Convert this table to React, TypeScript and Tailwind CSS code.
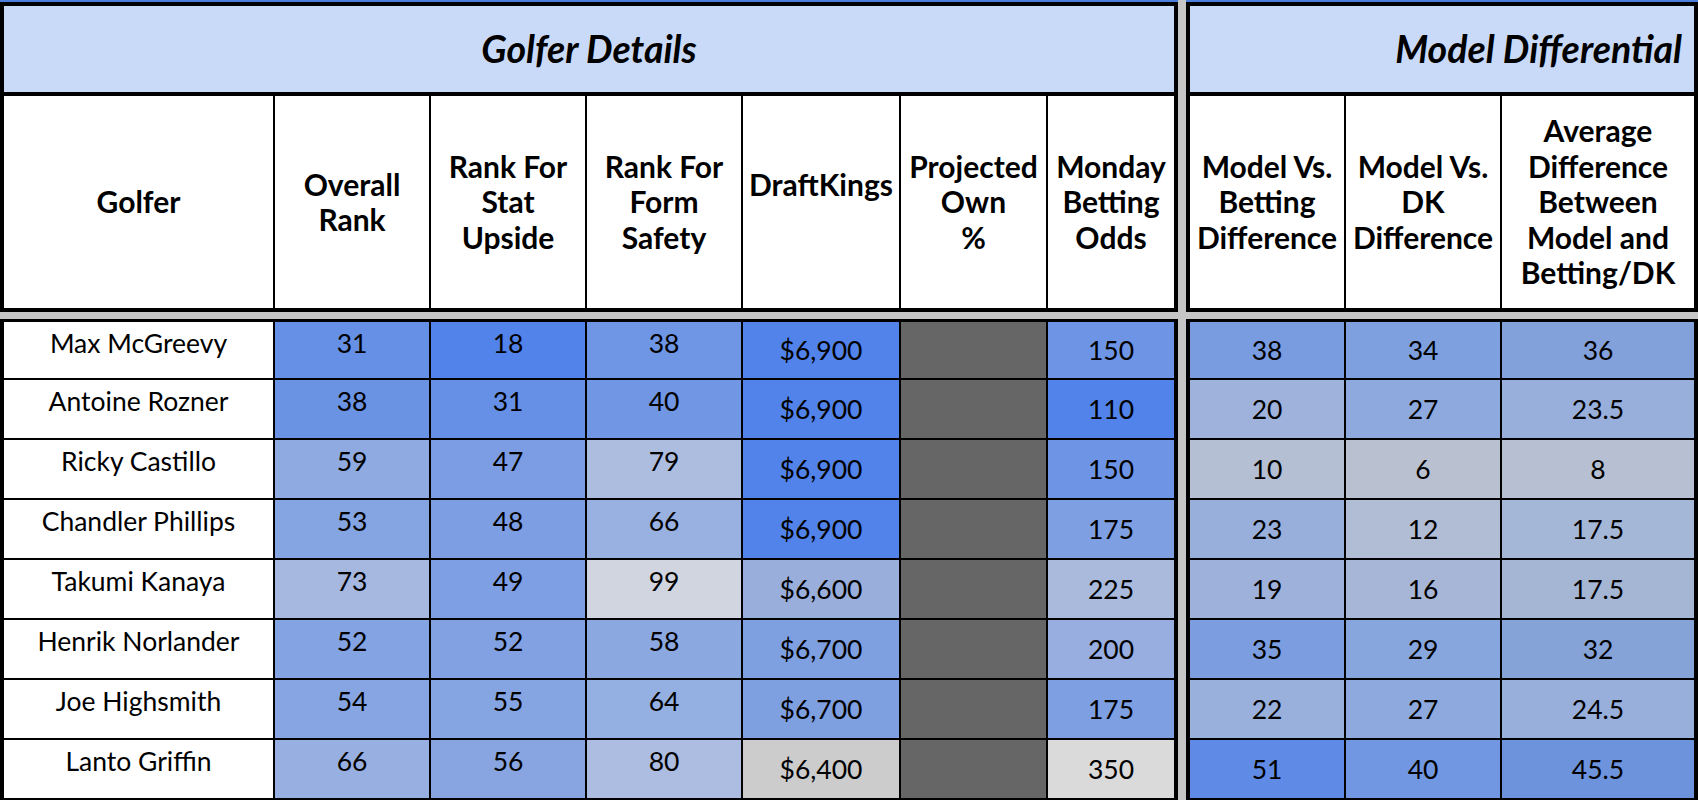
import React from 'react';

type Cell = { v: string; bg: string };

interface GolferRow {
  name: string;
  ranks: Cell[]; // overall, stat upside, form safety (top aligned)
  market: Cell[]; // draftkings, projected own, monday odds (centered)
  diff: Cell[]; // model differential
}

const PROJ = 'bg-[#666666]';

const rows: GolferRow[] = [
  {
    name: 'Max McGreevy',
    ranks: [
      { v: '31', bg: 'bg-[#6690e6]' },
      { v: '18', bg: 'bg-[#5283ea]' },
      { v: '38', bg: 'bg-[#6f95e5]' },
    ],
    market: [
      { v: '$6,900', bg: 'bg-[#5283eb]' },
      { v: '', bg: PROJ },
      { v: '150', bg: 'bg-[#6e95e5]' },
    ],
    diff: [
      { v: '38', bg: 'bg-[#799ce0]' },
      { v: '34', bg: 'bg-[#7ea0df]' },
      { v: '36', bg: 'bg-[#82a0d9]' },
    ],
  },
  {
    name: 'Antoine Rozner',
    ranks: [
      { v: '38', bg: 'bg-[#6b93e4]' },
      { v: '31', bg: 'bg-[#6690e6]' },
      { v: '40', bg: 'bg-[#7096e4]' },
    ],
    market: [
      { v: '$6,900', bg: 'bg-[#5283eb]' },
      { v: '', bg: PROJ },
      { v: '110', bg: 'bg-[#5283ea]' },
    ],
    diff: [
      { v: '20', bg: 'bg-[#9fb2dc]' },
      { v: '27', bg: 'bg-[#8da9de]' },
      { v: '23.5', bg: 'bg-[#98afdc]' },
    ],
  },
  {
    name: 'Ricky Castillo',
    ranks: [
      { v: '59', bg: 'bg-[#8eaae0]' },
      { v: '47', bg: 'bg-[#7c9de3]' },
      { v: '79', bg: 'bg-[#adbde0]' },
    ],
    market: [
      { v: '$6,900', bg: 'bg-[#5283eb]' },
      { v: '', bg: PROJ },
      { v: '150', bg: 'bg-[#6e95e5]' },
    ],
    diff: [
      { v: '10', bg: 'bg-[#b4bfd3]' },
      { v: '6', bg: 'bg-[#b9c1d1]' },
      { v: '8', bg: 'bg-[#b6c0d2]' },
    ],
  },
  {
    name: 'Chandler Phillips',
    ranks: [
      { v: '53', bg: 'bg-[#85a4e2]' },
      { v: '48', bg: 'bg-[#7d9ee3]' },
      { v: '66', bg: 'bg-[#99b1e1]' },
    ],
    market: [
      { v: '$6,900', bg: 'bg-[#5283eb]' },
      { v: '', bg: PROJ },
      { v: '175', bg: 'bg-[#7f9fe3]' },
    ],
    diff: [
      { v: '23', bg: 'bg-[#98afdb]' },
      { v: '12', bg: 'bg-[#b0bdd5]' },
      { v: '17.5', bg: 'bg-[#a5b7d7]' },
    ],
  },
  {
    name: 'Takumi Kanaya',
    ranks: [
      { v: '73', bg: 'bg-[#a6b8e0]' },
      { v: '49', bg: 'bg-[#7e9fe3]' },
      { v: '99', bg: 'bg-[#d0d5e0]' },
    ],
    market: [
      { v: '$6,600', bg: 'bg-[#9aaedb]' },
      { v: '', bg: PROJ },
      { v: '225', bg: 'bg-[#a9badd]' },
    ],
    diff: [
      { v: '19', bg: 'bg-[#9db1db]' },
      { v: '16', bg: 'bg-[#a7b6d6]' },
      { v: '17.5', bg: 'bg-[#a5b5d4]' },
    ],
  },
  {
    name: 'Henrik Norlander',
    ranks: [
      { v: '52', bg: 'bg-[#84a3e2]' },
      { v: '52', bg: 'bg-[#81a1e3]' },
      { v: '58', bg: 'bg-[#8ba8e1]' },
    ],
    market: [
      { v: '$6,700', bg: 'bg-[#7e9fe0]' },
      { v: '', bg: PROJ },
      { v: '200', bg: 'bg-[#98aee0]' },
    ],
    diff: [
      { v: '35', bg: 'bg-[#7c9ee0]' },
      { v: '29', bg: 'bg-[#88a6de]' },
      { v: '32', bg: 'bg-[#86a3d8]' },
    ],
  },
  {
    name: 'Joe Highsmith',
    ranks: [
      { v: '54', bg: 'bg-[#86a5e2]' },
      { v: '55', bg: 'bg-[#85a4e2]' },
      { v: '64', bg: 'bg-[#94afe1]' },
    ],
    market: [
      { v: '$6,700', bg: 'bg-[#7e9fe0]' },
      { v: '', bg: PROJ },
      { v: '175', bg: 'bg-[#7f9fe3]' },
    ],
    diff: [
      { v: '22', bg: 'bg-[#9ab0dc]' },
      { v: '27', bg: 'bg-[#8da9de]' },
      { v: '24.5', bg: 'bg-[#98aedb]' },
    ],
  },
  {
    name: 'Lanto Griffin',
    ranks: [
      { v: '66', bg: 'bg-[#98b0e1]' },
      { v: '56', bg: 'bg-[#88a5e2]' },
      { v: '80', bg: 'bg-[#adbde1]' },
    ],
    market: [
      { v: '$6,400', bg: 'bg-[#cccccc]' },
      { v: '', bg: PROJ },
      { v: '350', bg: 'bg-[#dadada]' },
    ],
    diff: [
      { v: '51', bg: 'bg-[#5f8be6]' },
      { v: '40', bg: 'bg-[#7297e2]' },
      { v: '45.5', bg: 'bg-[#6c93dc]' },
    ],
  },
];

const leftHeaders = [
  'Golfer',
  'Overall\nRank',
  'Rank For\nStat\nUpside',
  'Rank For\nForm\nSafety',
  'DraftKings\n\u00a0',
  'Projected\nOwn\n%',
  'Monday\nBetting\nOdds',
];

const rightHeaders = [
  'Model Vs.\nBetting\nDifference',
  'Model Vs.\nDK\nDifference',
  'Average\nDifference\nBetween\nModel and\nBetting/DK',
];

const LEFT_COLS = 'grid-cols-[269px_154px_154px_154px_156px_145px_126px]';
const RIGHT_COLS = 'grid-cols-[154px_154px_192px]';
const ROWS = 'grid-rows-[56px_repeat(7,58px)]';

function HeaderCell({ label }: { label: string }) {
  return (
    <div className="flex items-center justify-center bg-white text-center font-bold text-[30px] leading-[35.5px] whitespace-pre-line">
      {label}
    </div>
  );
}

// rank columns sit at the top of the cell, the rest are centred
function TopCell({ cell }: { cell: Cell }) {
  return <div className={`${cell.bg} pt-[6px] text-center text-[26.5px] leading-[30px]`}>{cell.v}</div>;
}

function MidCell({ cell }: { cell: Cell }) {
  return (
    <div className={`${cell.bg} flex items-center justify-center text-[26.5px] leading-[30px]`}>{cell.v}</div>
  );
}

export default function App() {
  return (
    <div
      className="flex w-[1698px] h-[800px] gap-[8px] overflow-hidden bg-[#c6c6c6] text-black"
      style={{ fontFamily: 'Lato, "Open Sans", sans-serif' }}
    >
      {/* Golfer details */}
      <div className="flex flex-col w-[1178px]">
        <div className="h-[2px] bg-[#4a7fdc]" />
        <div className="flex flex-col border-4 border-black">
          <div className="flex h-[90px] items-center justify-center border-b-4 border-black bg-[#c9daf8]">
            <span className="text-[37.5px] font-bold italic">Golfer Details</span>
          </div>
          <div className={`grid ${LEFT_COLS} h-[212px] gap-[2px] bg-black`}>
            {leftHeaders.map((h) => (
              <HeaderCell key={h} label={h} />
            ))}
          </div>
        </div>
        <div className={`mt-[7px] grid ${LEFT_COLS} ${ROWS} gap-[2px] bg-black border-t-[3px] border-b-2 border-x-4 border-black`}>
          {rows.map((r) => (
            <React.Fragment key={r.name}>
              <TopCell cell={{ v: r.name, bg: 'bg-white' }} />
              {r.ranks.map((c, i) => (
                <TopCell key={'r' + i} cell={c} />
              ))}
              {r.market.map((c, i) => (
                <MidCell key={'m' + i} cell={c} />
              ))}
            </React.Fragment>
          ))}
        </div>
      </div>

      {/* Model differential */}
      <div className="flex flex-col w-[512px]">
        <div className="h-[2px] bg-[#4a7fdc]" />
        <div className="flex flex-col border-4 border-black">
          <div className="flex h-[90px] items-center justify-end border-b-4 border-black bg-[#c9daf8] pr-[12px]">
            <span className="text-[37.5px] font-bold italic">Model Differential</span>
          </div>
          <div className={`grid ${RIGHT_COLS} h-[212px] gap-[2px] bg-black`}>
            {rightHeaders.map((h) => (
              <HeaderCell key={h} label={h} />
            ))}
          </div>
        </div>
        <div className={`mt-[7px] grid ${RIGHT_COLS} ${ROWS} gap-[2px] bg-black border-t-[3px] border-b-2 border-x-4 border-black`}>
          {rows.map((r) =>
            r.diff.map((c, i) => <MidCell key={r.name + i} cell={c} />)
          )}
        </div>
      </div>
    </div>
  );
}
